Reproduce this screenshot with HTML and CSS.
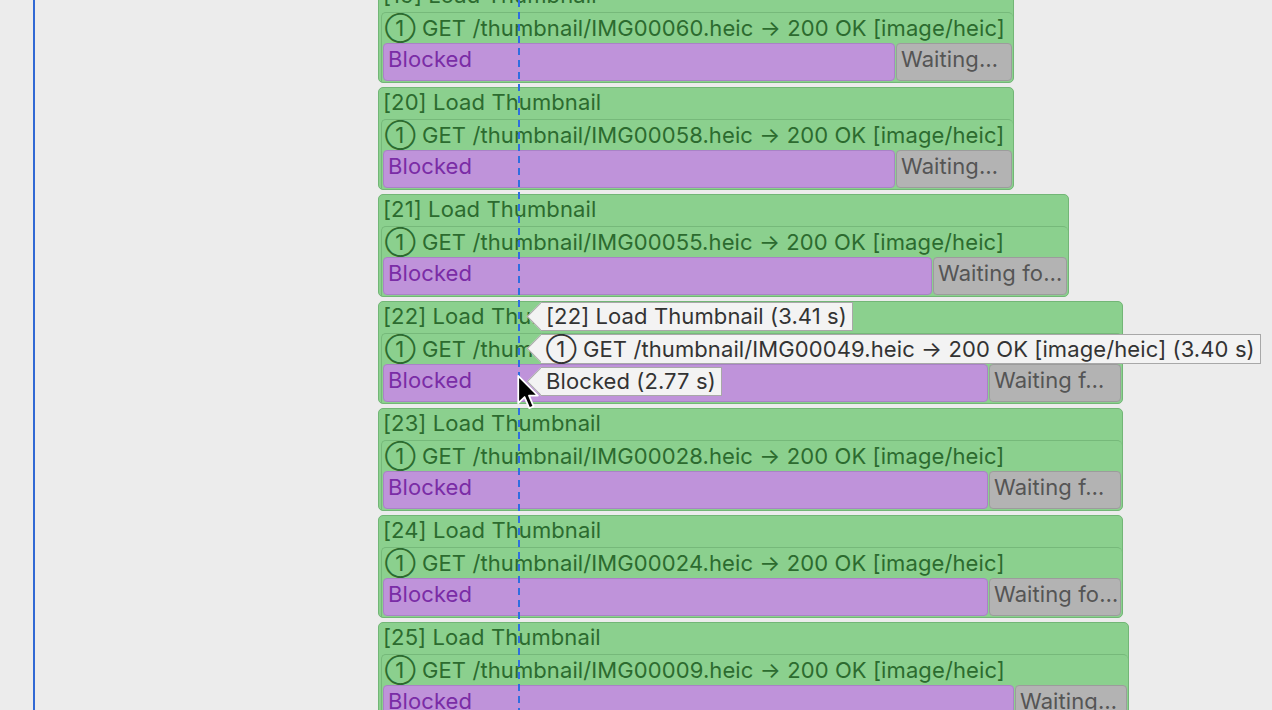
FILE: index.html
```html
<!DOCTYPE html>
<html lang="en">
<head>
    <meta charset="UTF-8">
    <title>Thumbnail Load Timeline</title>
    <link rel="stylesheet" href="styles.css">
</head>
<body>

<div class="app">
    <div class="gutter"></div>
    <div class="timeline">
        <div class="spans">
            <!-- [19] -->
            <div class="span" style="width: 636px;">
                <div class="span-title">[19] Load Thumbnail</div>
                <div class="request">
                    <div class="request-title">① GET /thumbnail/IMG00060.heic → 200 OK [image/heic]</div>
                    <div class="phases">
                        <div class="phase blocked" style="width: 512px;">Blocked</div>
                        <div class="phase waiting">Waiting…</div>
                    </div>
                </div>
            </div>
            <!-- [20] -->
            <div class="span" style="width: 636px;">
                <div class="span-title">[20] Load Thumbnail</div>
                <div class="request">
                    <div class="request-title">① GET /thumbnail/IMG00058.heic → 200 OK [image/heic]</div>
                    <div class="phases">
                        <div class="phase blocked" style="width: 512px;">Blocked</div>
                        <div class="phase waiting">Waiting…</div>
                    </div>
                </div>
            </div>
            <!-- [21] -->
            <div class="span" style="width: 691px;">
                <div class="span-title">[21] Load Thumbnail</div>
                <div class="request">
                    <div class="request-title">① GET /thumbnail/IMG00055.heic → 200 OK [image/heic]</div>
                    <div class="phases">
                        <div class="phase blocked" style="width: 549px;">Blocked</div>
                        <div class="phase waiting">Waiting fo…</div>
                    </div>
                </div>
            </div>
            <!-- [22] -->
            <div class="span" style="width: 745px;">
                <div class="span-title">[22] Load Thumbnail</div>
                <div class="request">
                    <div class="request-title">① GET /thumbnail/IMG00049.heic → 200 OK [image/heic]</div>
                    <div class="phases">
                        <div class="phase blocked" style="width: 605px;">Blocked</div>
                        <div class="phase waiting">Waiting f…</div>
                    </div>
                </div>
            </div>
            <!-- [23] -->
            <div class="span" style="width: 745px;">
                <div class="span-title">[23] Load Thumbnail</div>
                <div class="request">
                    <div class="request-title">① GET /thumbnail/IMG00028.heic → 200 OK [image/heic]</div>
                    <div class="phases">
                        <div class="phase blocked" style="width: 605px;">Blocked</div>
                        <div class="phase waiting">Waiting f…</div>
                    </div>
                </div>
            </div>
            <!-- [24] -->
            <div class="span" style="width: 745px;">
                <div class="span-title">[24] Load Thumbnail</div>
                <div class="request">
                    <div class="request-title">① GET /thumbnail/IMG00024.heic → 200 OK [image/heic]</div>
                    <div class="phases">
                        <div class="phase blocked" style="width: 605px;">Blocked</div>
                        <div class="phase waiting">Waiting fo…</div>
                    </div>
                </div>
            </div>
            <!-- [25] -->
            <div class="span" style="width: 751px;">
                <div class="span-title">[25] Load Thumbnail</div>
                <div class="request">
                    <div class="request-title">① GET /thumbnail/IMG00009.heic → 200 OK [image/heic]</div>
                    <div class="phases">
                        <div class="phase blocked" style="width: 631px;">Blocked</div>
                        <div class="phase waiting">Waiting…</div>
                    </div>
                </div>
            </div>
        </div>

        <!-- hover cursor line -->
        <div class="cursor-line"></div>

        <!-- hover tooltips -->
        <div class="tips">
            <div class="tip tip-span">[22] Load Thumbnail (3.41 s)</div>
            <div class="tip tip-request">① GET /thumbnail/IMG00049.heic → 200 OK [image/heic] (3.40 s)</div>
            <div class="tip tip-phase">Blocked (2.77 s)</div>
        </div>

        <svg class="pointer" width="26" height="38" viewBox="0 0 20 30">
            <path d="M1.5 1.5 L1.5 23 L6.5 18.2 L10.2 27 L13.6 25.6 L10 17 L17 17 Z" fill="#000" stroke="#fff" stroke-width="1.4" stroke-linejoin="round"/>
        </svg>
    </div>
</div>

</body>
</html>
```

FILE: styles.css
```css
html, body {
    margin: 0;
    height: 100%;
}
body {
    background-color: #ececec;
    font-family: Inter, "Liberation Sans", Arial, sans-serif;
    font-size: 22px;
    letter-spacing: 0.1px;
    overflow: hidden;
}
.app {
    display: flex;
    height: 710px;
}
.gutter {
    width: 33px;
    flex: none;
}
.timeline {
    position: relative;
    flex: 1;
    border-left: 2px solid #3169d4;
    padding-left: 343px;
}
.spans {
    display: flex;
    flex-direction: column;
    gap: 4px;
    margin-top: -20px;
}
.span {
    box-sizing: border-box;
    height: 103px;
    background-color: #8bd08e;
    border: 1px solid #72b676;
    border-radius: 5px;
    display: flex;
    flex-direction: column;
}
.span-title {
    height: 31px;
    line-height: 28px;
    padding-left: 4px;
    color: #2c6b2f;
    white-space: nowrap;
}
.request {
    flex: 1;
    margin-left: 2px;
    border: 1px solid #76b97a;
    border-bottom: none;
    border-right-width: 0;
    border-radius: 5px 5px 0 0;
    display: flex;
    flex-direction: column;
}
.request-title {
    height: 30px;
    line-height: 30px;
    padding-left: 3px;
    color: #2c6b2f;
    white-space: nowrap;
}
.phases {
    flex: 1;
    display: flex;
    gap: 1px;
    padding: 0 1px 1px 1px;
}
.phase {
    box-sizing: border-box;
    height: 100%;
    line-height: 30px;
    padding-left: 4px;
    border-radius: 4px;
    white-space: nowrap;
    overflow: hidden;
}
.blocked {
    flex: none;
    background-color: #bf93da;
    color: #7a2ca6;
    border: 1px solid #a982c6;
}
.waiting {
    flex: 1;
    background-color: #b3b3b3;
    color: #555;
    border: 1px solid #9c9c9c;
}
.cursor-line {
    position: absolute;
    top: 0;
    bottom: 0;
    left: 483px;
    width: 2px;
    background: repeating-linear-gradient(to bottom, #2f6ee0 0 7px, transparent 7px 12px);
}
.tips {
    position: absolute;
    z-index: 1;
    left: 506px;
    top: 302px;
    display: flex;
    flex-direction: column;
    align-items: flex-start;
    gap: 3px;
}
.tip {
    position: relative;
    box-sizing: border-box;
    height: 29px;
    line-height: 27px;
    padding: 0 5px 0 5px;
    color: #333;
    background-color: #f3f3f3;
    border: 1px solid #a8a8a8;
    border-left: none;
    white-space: nowrap;
}
.tip::before {
    content: "";
    position: absolute;
    left: -10px;
    top: 3px;
    width: 20px;
    height: 20px;
    background-color: #f3f3f3;
    border-left: 1px solid #a8a8a8;
    border-bottom: 1px solid #a8a8a8;
    transform: rotate(45deg);
    z-index: -1;
}
.tip-request {
    height: 30px;
    line-height: 28px;
}
.pointer {
    position: absolute;
    z-index: 2;
    left: 481px;
    top: 374px;
}
```
